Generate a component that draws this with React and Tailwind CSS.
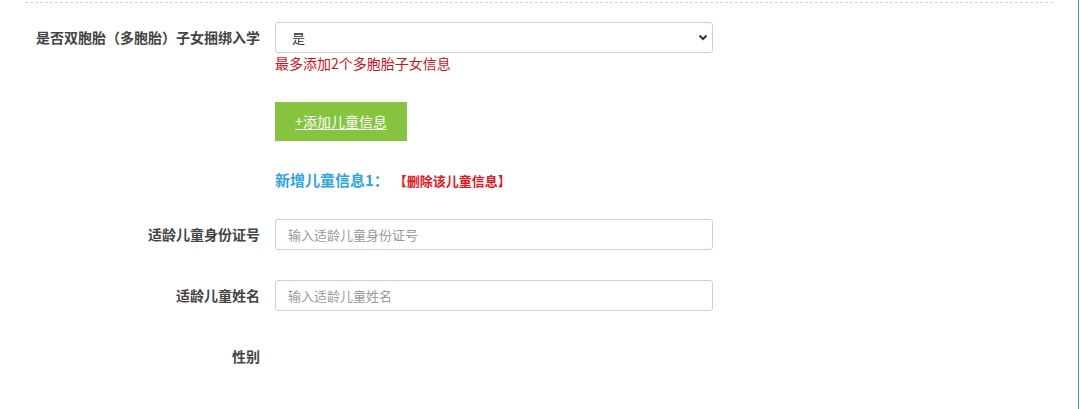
import React, { useState } from "react";

const FONT = { fontFamily: '"Microsoft YaHei", "Noto Sans CJK SC", sans-serif' };

const Label = ({ children }) => (
  <div className="w-[260px] shrink-0 pr-0 text-right text-[14px] font-bold text-[#444]">
    {children}
  </div>
);

const App = () => {
  const [twins, setTwins] = useState("是");

  return (
    <div className="flex h-[409px] w-full bg-white" style={FONT}>
      <div className="flex-1 flex flex-col">
        {/* ========== dashed divider ========== */}
        <div className="mx-[25px] mt-[2px] border-t border-dashed border-[#d6d6d6]" />

        {/* ========== 多胞胎 ========== */}
        <div className="flex flex-row items-center gap-[15px] mt-[19px]">
          <Label>是否双胞胎（多胞胎）子女捆绑入学</Label>
          <div className="relative w-[438px]">
            <select
              value={twins}
              onChange={(e) => setTwins(e.target.value)}
              className="w-full h-[31px] appearance-none rounded-[3px] border border-[#cfcfcf] bg-white pl-[16px] text-[13px] text-[#333] outline-none"
              style={FONT}
            >
              <option value="是">是</option>
              <option value="否">否</option>
            </select>
            <svg
              className="absolute right-[5px] top-[12px] pointer-events-none"
              width="10"
              height="7"
              viewBox="0 0 10 7"
            >
              <path d="M1.5 1.5 L5 5 L8.5 1.5" fill="none" stroke="#333" strokeWidth="2" />
            </svg>
          </div>
        </div>
        <div className="flex flex-row gap-[15px]">
          <div className="w-[260px] shrink-0" />
          <p className="text-[14px] leading-[20px] text-[#d4111a]">最多添加2个多胞胎子女信息</p>
        </div>

        {/* ========== add button ========== */}
        <div className="flex flex-row gap-[15px] mt-[29px]">
          <div className="w-[260px] shrink-0" />
          <button
            className="w-[132px] h-[39px] bg-[#86c440] text-white text-[14px] underline underline-offset-2"
            style={FONT}
          >
            +添加儿童信息
          </button>
        </div>

        {/* ========== child 1 ========== */}
        <div className="flex flex-row gap-[15px] mt-[28px] items-center">
          <div className="w-[260px] shrink-0" />
          <span className="text-[15px] font-bold text-[#2fa3e3]">新增儿童信息1：</span>
          <span className="text-[13px] font-bold text-[#e8141b] -ml-[10px]">【删除该儿童信息】</span>
        </div>

        <div className="flex flex-row items-center gap-[15px] mt-[27px]">
          <Label>适龄儿童身份证号</Label>
          <input
            placeholder="输入适龄儿童身份证号"
            className="w-[438px] h-[31px] rounded-[3px] border border-[#cfcfcf] px-[12px] text-[13px] text-[#333] placeholder:text-[#9a9a9a] outline-none"
            style={FONT}
          />
        </div>

        <div className="flex flex-row items-center gap-[15px] mt-[30px]">
          <Label>适龄儿童姓名</Label>
          <input
            placeholder="输入适龄儿童姓名"
            className="w-[438px] h-[31px] rounded-[3px] border border-[#cfcfcf] px-[12px] text-[13px] text-[#333] placeholder:text-[#9a9a9a] outline-none"
            style={FONT}
          />
        </div>

        <div className="flex flex-row items-center gap-[15px] mt-[35px]">
          <Label>性别</Label>
        </div>
      </div>
      <div className="w-px bg-[#3ba6c4]" />
      <div className="w-px bg-white" />
    </div>
  );
};

export default App;
